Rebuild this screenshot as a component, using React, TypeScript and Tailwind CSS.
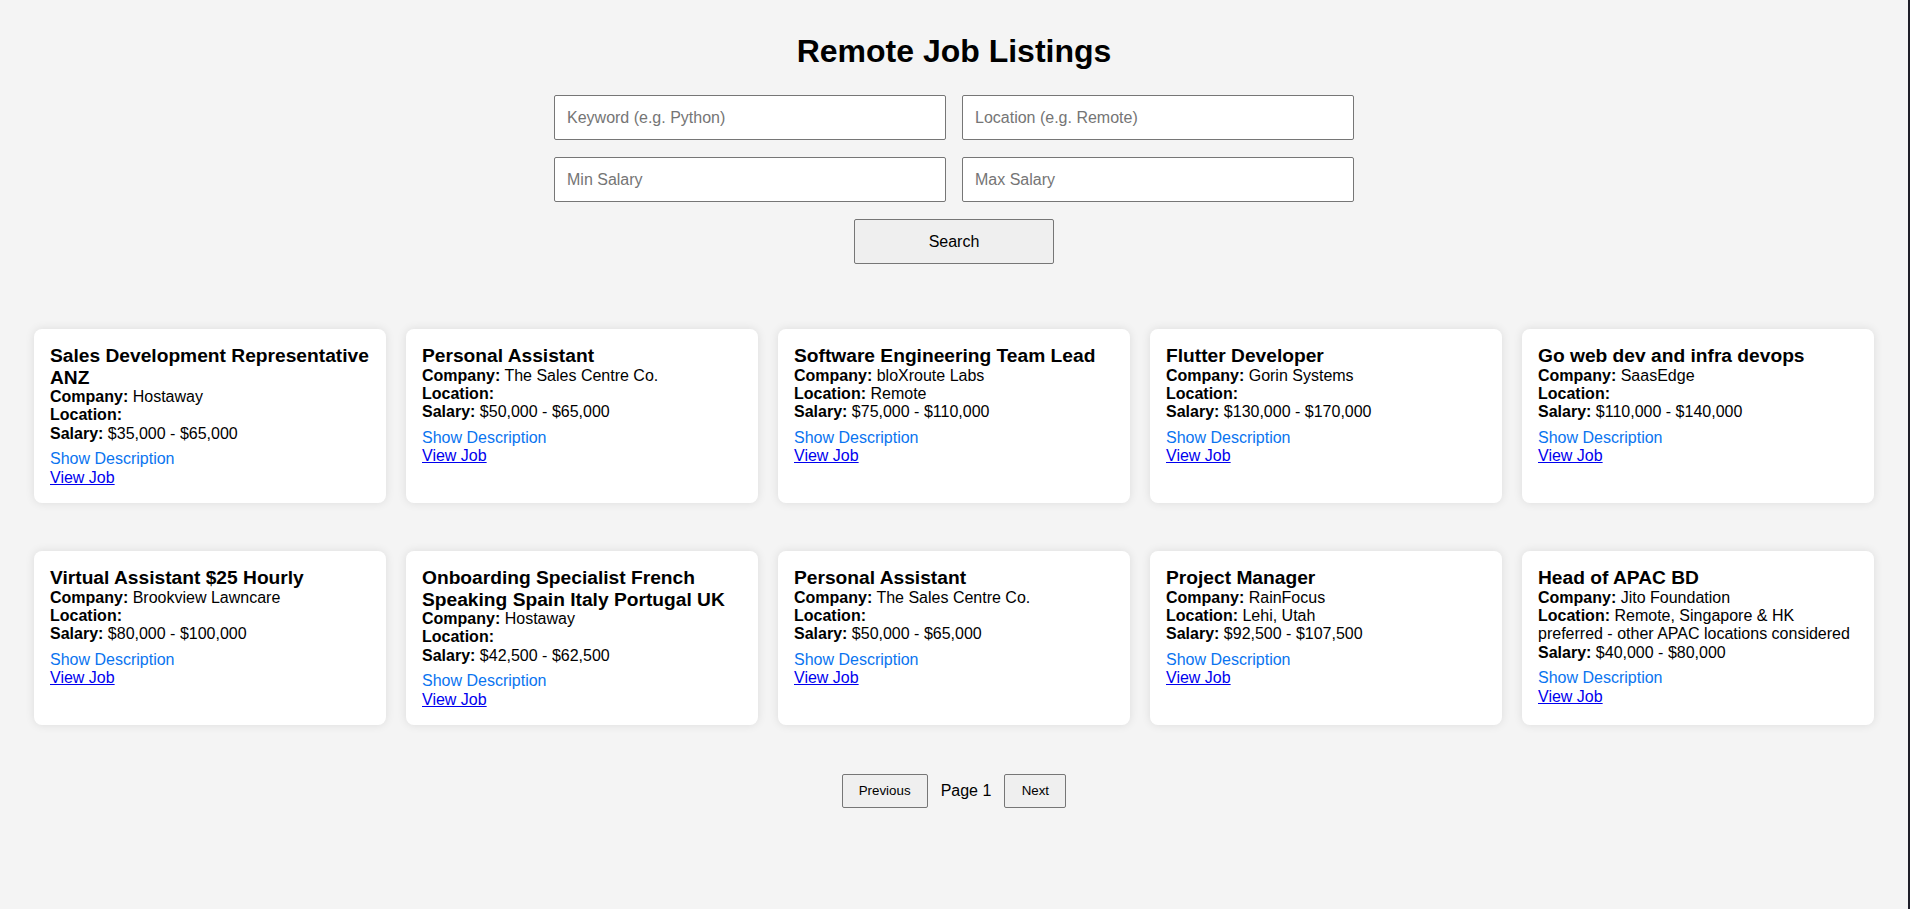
import React from "react";

type Job = {
  title: string;
  company: string;
  location: string;
  salary: string;
};

const jobs: Job[] = [
  { title: "Sales Development Representative ANZ", company: "Hostaway", location: "", salary: "$35,000 - $65,000" },
  { title: "Personal Assistant", company: "The Sales Centre Co.", location: "", salary: "$50,000 - $65,000" },
  { title: "Software Engineering Team Lead", company: "bloXroute Labs", location: "Remote", salary: "$75,000 - $110,000" },
  { title: "Flutter Developer", company: "Gorin Systems", location: "", salary: "$130,000 - $170,000" },
  { title: "Go web dev and infra devops", company: "SaasEdge", location: "", salary: "$110,000 - $140,000" },
  { title: "Virtual Assistant $25 Hourly", company: "Brookview Lawncare", location: "", salary: "$80,000 - $100,000" },
  { title: "Onboarding Specialist French Speaking Spain Italy Portugal UK", company: "Hostaway", location: "", salary: "$42,500 - $62,500" },
  { title: "Personal Assistant", company: "The Sales Centre Co.", location: "", salary: "$50,000 - $65,000" },
  { title: "Project Manager", company: "RainFocus", location: "Lehi, Utah", salary: "$92,500 - $107,500" },
  { title: "Head of APAC BD", company: "Jito Foundation", location: "Remote, Singapore & HK preferred - other APAC locations considered", salary: "$40,000 - $80,000" },
];

function JobCard({ job }: { job: Job }) {
  return (
    <div className="bg-white rounded-[8px] p-[16px] shadow-[0_0_10px_rgba(0,0,0,0.1)]">
      <h3 className="text-[19.2px] leading-[21.5px] font-bold">{job.title}</h3>
      <p className="text-[16px] leading-[18.4px]">
        <strong className="font-bold">Company:</strong> {job.company}
      </p>
      <p className="text-[16px] leading-[18.4px]">
        <strong className="font-bold">Location:</strong> {job.location}
      </p>
      <p className="text-[16px] leading-[18.4px]">
        {" "}
        <strong className="font-bold">Salary:</strong> {job.salary}
      </p>
      <button className="mt-[7px] block p-0 bg-transparent border-0 text-[16px] leading-[18.4px] text-[#0a74f0] cursor-pointer">
        Show Description
      </button>
      <a href="#" className="block w-fit text-[16px] leading-[18.4px] text-[#0000ee] underline">
        View Job
      </a>
    </div>
  );
}

export default function App() {
  return (
    <div className="flex min-h-screen bg-[#f4f4f4] font-['Liberation_Sans',Arial,sans-serif] text-black">
      <div className="flex-1 flex flex-col items-center pt-[33px] px-[34px] pb-[40px]">
        <h1 className="text-[32px] leading-[37px] font-bold">Remote Job Listings</h1>
        <div className="mt-[25px] grid grid-cols-2 gap-x-[16px] gap-y-[17px] w-[800px]">
          {["Keyword (e.g. Python)", "Location (e.g. Remote)", "Min Salary", "Max Salary"].map((p) => (
            <input
              key={p}
              type="text"
              placeholder={p}
              className="h-[45px] px-[12px] text-[16px] bg-white border border-[#767676] rounded-[2px] placeholder:text-[#757575] outline-none"
            />
          ))}
        </div>
        <button className="mt-[17px] w-[200px] h-[45px] text-[16px] bg-[#efefef] border border-[#767676] rounded-[2px]">
          Search
        </button>
        <div className="mt-[65px] grid grid-cols-5 gap-x-[20px] gap-y-[48px] w-full">
          {jobs.map((j, i) => (
            <JobCard key={i} job={j} />
          ))}
        </div>
        <div className="mt-[49px] flex items-center gap-[13px]">
          <button className="h-[34px] w-[86px] text-[13.33px] bg-[#efefef] border border-[#767676] rounded-[2px]">
            Previous
          </button>
          <span className="text-[16px]">Page 1</span>
          <button className="h-[34px] w-[62px] text-[13.33px] bg-[#efefef] border border-[#767676] rounded-[2px]">
            Next
          </button>
        </div>
      </div>
      <div className="w-[2px] shrink-0 bg-[#1e1e28]" />
    </div>
  );
}
